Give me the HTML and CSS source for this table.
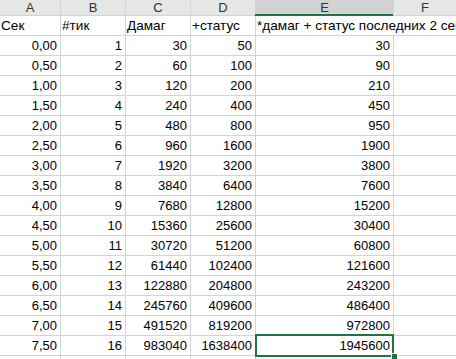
FILE: index.html
```html
<!DOCTYPE html>
<html>
<head>
<meta charset="utf-8">
<link rel="stylesheet" href="styles.css">
</head>
<body>
<div class="sheet">
  <div class="hd">A</div><div class="hd">B</div><div class="hd">C</div><div class="hd">D</div><div class="hd hd-sel">E</div><div class="hd">F</div>
  <div class="c t">Сек</div><div class="c t">#тик</div><div class="c t">Дамаг</div><div class="c t">+статус</div><div class="c t span2">*дамаг + статус последних 2 сек</div>
  <div class="c">0,00</div><div class="c">1</div><div class="c">30</div><div class="c">50</div><div class="c">30</div><div class="c"></div>
  <div class="c">0,50</div><div class="c">2</div><div class="c">60</div><div class="c">100</div><div class="c">90</div><div class="c"></div>
  <div class="c">1,00</div><div class="c">3</div><div class="c">120</div><div class="c">200</div><div class="c">210</div><div class="c"></div>
  <div class="c">1,50</div><div class="c">4</div><div class="c">240</div><div class="c">400</div><div class="c">450</div><div class="c"></div>
  <div class="c">2,00</div><div class="c">5</div><div class="c">480</div><div class="c">800</div><div class="c">950</div><div class="c"></div>
  <div class="c">2,50</div><div class="c">6</div><div class="c">960</div><div class="c">1600</div><div class="c">1900</div><div class="c"></div>
  <div class="c">3,00</div><div class="c">7</div><div class="c">1920</div><div class="c">3200</div><div class="c">3800</div><div class="c"></div>
  <div class="c">3,50</div><div class="c">8</div><div class="c">3840</div><div class="c">6400</div><div class="c">7600</div><div class="c"></div>
  <div class="c">4,00</div><div class="c">9</div><div class="c">7680</div><div class="c">12800</div><div class="c">15200</div><div class="c"></div>
  <div class="c">4,50</div><div class="c">10</div><div class="c">15360</div><div class="c">25600</div><div class="c">30400</div><div class="c"></div>
  <div class="c">5,00</div><div class="c">11</div><div class="c">30720</div><div class="c">51200</div><div class="c">60800</div><div class="c"></div>
  <div class="c">5,50</div><div class="c">12</div><div class="c">61440</div><div class="c">102400</div><div class="c">121600</div><div class="c"></div>
  <div class="c">6,00</div><div class="c">13</div><div class="c">122880</div><div class="c">204800</div><div class="c">243200</div><div class="c"></div>
  <div class="c">6,50</div><div class="c">14</div><div class="c">245760</div><div class="c">409600</div><div class="c">486400</div><div class="c"></div>
  <div class="c">7,00</div><div class="c">15</div><div class="c">491520</div><div class="c">819200</div><div class="c">972800</div><div class="c"></div>
  <div class="c">7,50</div><div class="c">16</div><div class="c">983040</div><div class="c">1638400</div><div class="c sel">1945600</div><div class="c"></div>
  <div class="c"></div><div class="c"></div><div class="c"></div><div class="c"></div><div class="c"></div><div class="c"></div>
</div>
</body>
</html>
```
FILE: styles.css
```css
html, body {
  margin: 0;
  padding: 0;
  background: #ffffff;
  overflow: hidden;
}
body {
  width: 456px;
  height: 359px;
  font-family: "Liberation Sans", Arial, sans-serif;
  font-size: 13px;
  color: #000000;
}
.sheet {
  display: grid;
  grid-template-columns: 60px 64px 64px 64px 137px 62px;
  grid-template-rows: 15px repeat(18, 19px);
  gap: 1px;
  background: #d4d4d4;
  width: 456px;
}
.hd {
  background: #e6e6e6;
  color: #333333;
  text-align: center;
  line-height: 16px;
  font-size: 13px;
}
.hd-sel {
  background: #d2d2d2;
  position: relative;
}
.hd-sel::after {
  content: "";
  position: absolute;
  left: -1px;
  right: 0;
  bottom: -1px;
  height: 2px;
  background: #217346;
}
.c {
  background: #ffffff;
  text-align: right;
  padding-right: 3px;
  line-height: 20px;
  white-space: nowrap;
  overflow: hidden;
}
.c.t {
  text-align: left;
  padding-left: 1px;
  padding-right: 0;
  font-size: 13.6px;
}
.span2 {
  grid-column: span 2;
}
.sel {
  position: relative;
  overflow: visible;
}
.sel::after {
  content: "";
  position: absolute;
  left: -1px;
  right: -1px;
  top: -2px;
  bottom: -2px;
  border: 2px solid #217346;
}
.sel::before {
  content: "";
  position: absolute;
  right: -4px;
  bottom: -4px;
  width: 5px;
  height: 5px;
  background: #217346;
  box-shadow: 0 0 0 1px #ffffff;
  z-index: 1;
}
```
